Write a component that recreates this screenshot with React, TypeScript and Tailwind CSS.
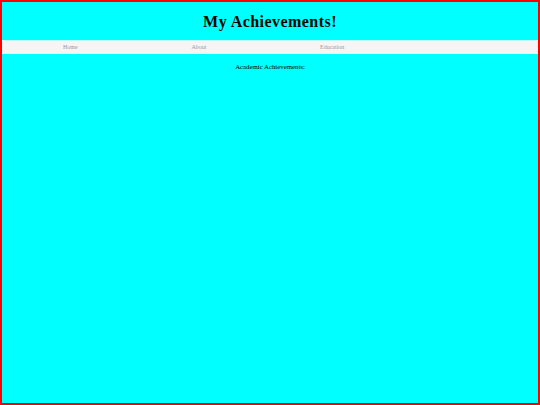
export default function App() {
  const links = ["Home", "About", "Education"];
  return (
    <div
      className="h-[405px] w-[540px] border-2 border-[#ff0000] bg-[#00ffff] text-black"
      style={{ fontFamily: '"Liberation Serif", "Times New Roman", serif' }}
    >
      {/* Header */}
      <header className="flex h-[38px] items-center justify-center pt-[1px]">
        <h1 className="text-[16px] font-bold leading-none tracking-[0.45px]">My Achievements!</h1>
      </header>

      {/* Nav */}
      <nav className="flex h-[14px] items-center border-y border-[#c8ffff] bg-[#f5f5f5] pl-[61px]">
        {links.map((l) => (
          <a key={l} className="w-[128.5px] text-[6px] leading-none text-[#a09898]">
            {l}
          </a>
        ))}
      </nav>

      <p className="mt-[10px] text-center text-[6.8px] leading-none">Academic Achievements:</p>
    </div>
  );
}
